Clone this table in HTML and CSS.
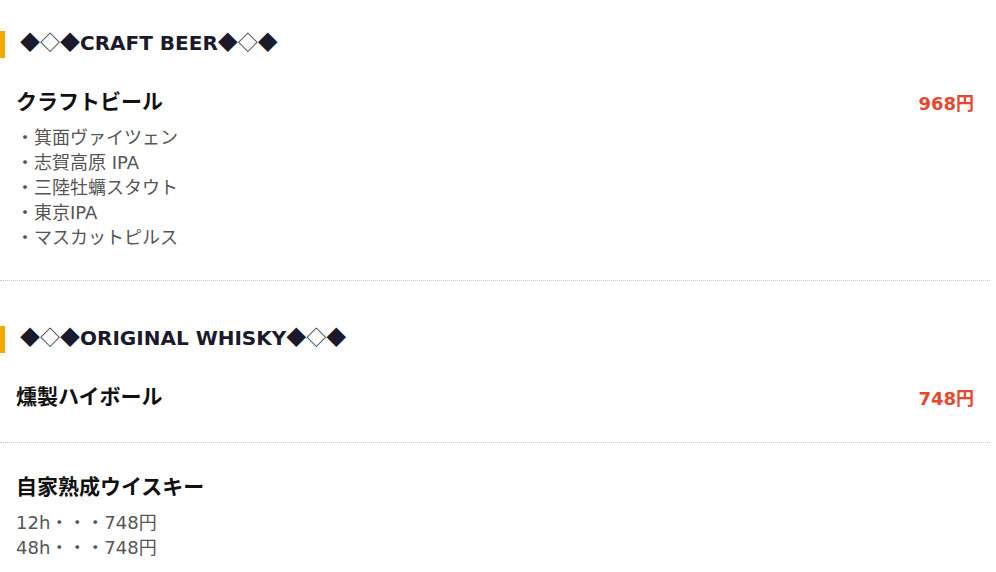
FILE: index.html
```html
<!DOCTYPE html>
<html lang="ja">
<head>
  <meta charset="UTF-8">
  <title>ドリンクメニュー</title>
  <link rel="stylesheet" href="styles.css">
</head>
<body>

  <div class="menu">
    <!-- クラフトビール -->
    <div class="section">
      <h2 class="section-title"><span class="deco">◆◇◆</span>CRAFT BEER<span class="deco">◆◇◆</span></h2>
      <div class="item">
        <div class="item-head">
          <h3 class="item-name">クラフトビール</h3>
          <span class="item-price">968円</span>
        </div>
        <div class="item-desc">
          ・箕面ヴァイツェン<br>
          ・志賀高原 IPA<br>
          ・三陸牡蠣スタウト<br>
          ・東京IPA<br>
          ・マスカットピルス
        </div>
      </div>
    </div>

    <!-- ウイスキー -->
    <div class="section">
      <h2 class="section-title"><span class="deco">◆◇◆</span>ORIGINAL WHISKY<span class="deco">◆◇◆</span></h2>
      <div class="item">
        <div class="item-head">
          <h3 class="item-name">燻製ハイボール</h3>
          <span class="item-price">748円</span>
        </div>
      </div>
      <div class="item">
        <div class="item-head">
          <h3 class="item-name">自家熟成ウイスキー</h3>
        </div>
        <div class="item-desc">
          12h・・・748円<br>
          48h・・・748円
        </div>
      </div>
    </div>
  </div>

</body>
</html>
```

FILE: styles.css
```css
* {
  box-sizing: border-box;
}

body {
  margin: 0;
  padding: 0;
  font-family: "DejaVu Sans", "Noto Sans CJK JP", sans-serif;
  background: #fff;
  color: #111;
}

.menu {
  width: 990px;
  padding-top: 31px;
}

.section + .section {
  margin-top: 45px;
}

.section-title {
  margin: 0;
  padding: 0 0 4px 15px;
  border-left: 5px solid #f7a800;
  font-size: 20px;
  line-height: 22px;
  font-weight: bold;
  color: #1a1a2c;
}

.deco {
  font-family: "Noto Sans CJK JP", sans-serif;
  font-weight: normal;
}

.item {
  padding: 29px 16px 30px;
  border-bottom: 1px dotted #c8c8c8;
}

.item-head {
  display: flex;
  justify-content: space-between;
  align-items: center;
}

.item-name {
  margin: 0;
  font-size: 21px;
  line-height: 30px;
  font-weight: bold;
  color: #111;
}

.item-price {
  font-size: 18px;
  font-weight: bold;
  color: #e8472f;
}

.item-desc {
  margin-top: 8px;
  font-size: 18px;
  line-height: 25px;
  color: #555;
}
```
